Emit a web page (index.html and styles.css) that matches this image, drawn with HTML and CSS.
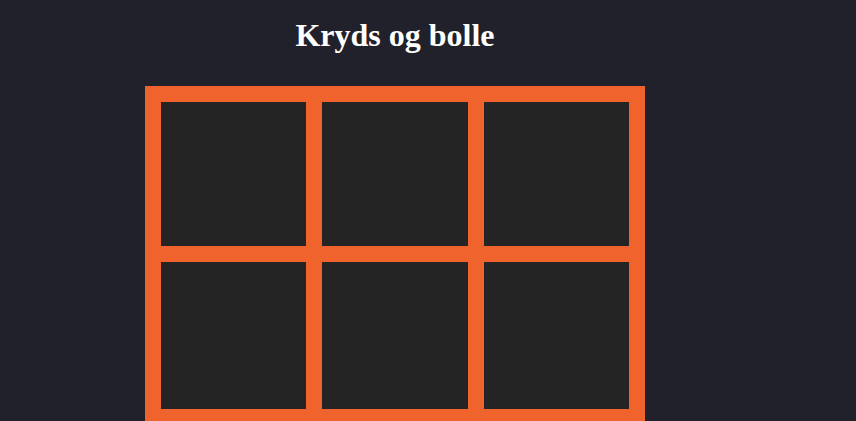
FILE: index.html
```html
<!DOCTYPE html>
<html lang="da">
<head>
<meta charset="utf-8">
<title>Kryds og bolle</title>
<link rel="stylesheet" href="styles.css">
</head>
<body>
<main class="game">
  <h1 class="title">Kryds og bolle</h1>
  <div class="board">
    <div class="cell"></div>
    <div class="cell"></div>
    <div class="cell"></div>
    <div class="cell"></div>
    <div class="cell"></div>
    <div class="cell"></div>
  </div>
</main>
</body>
</html>
```
FILE: styles.css
```css
html, body {
  margin: 0;
  padding: 0;
  background: #21212b;
  height: 100%;
  overflow: hidden;
}
.game {
  width: 500px;
  margin-left: 145px;
  padding-top: 17px;
}
.title {
  margin: 0 0 32px 0;
  font-family: "Liberation Serif", "Times New Roman", serif;
  font-weight: bold;
  font-size: 32px;
  line-height: 37px;
  color: #ffffff;
  text-align: center;
}
.board {
  background: #f0632c;
  padding: 16px;
  display: grid;
  grid-template-columns: repeat(3, 1fr);
  grid-template-rows: 144px 147px;
  gap: 16px;
}
.cell {
  background: #242424;
}
```
